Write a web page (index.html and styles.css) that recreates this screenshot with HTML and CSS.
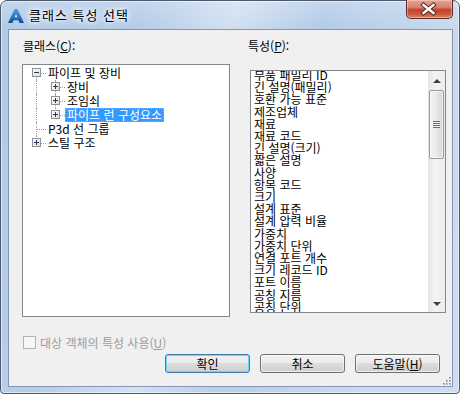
FILE: index.html
```html
<!DOCTYPE html>
<html lang="ko">
<head>
    <meta charset="UTF-8">
    <title>클래스 특성 선택</title>
    <link rel="stylesheet" href="styles.css">
</head>
<body>
    <div class="window">
        <div class="titlebar">
            <svg class="app-icon" width="16" height="14" viewBox="0 0 16 14">
                <defs>
                    <linearGradient id="ag" x1="0" y1="0" x2="0" y2="1">
                        <stop offset="0" stop-color="#45a6e8"/>
                        <stop offset="1" stop-color="#0c4f96"/>
                    </linearGradient>
                </defs>
                <path d="M6.6 0H9.4L16 14H11.6L10.4 11.2H5.6L4.4 14H0ZM8 4.6L6.6 8.4H9.4Z" fill="url(#ag)" fill-rule="evenodd"/>
            </svg>
            <span class="title">클래스 특성 선택</span>
            <div class="close-btn">
                <svg width="47" height="19" viewBox="0 0 47 19">
                    <path d="M18.5 5L28.5 13M28.5 5L18.5 13" stroke="#45201c" stroke-width="4.2" stroke-linecap="square"/>
                    <path d="M18.5 5L28.5 13M28.5 5L18.5 13" stroke="#fff" stroke-width="2.4" stroke-linecap="square"/>
                </svg>
            </div>
        </div>

        <div class="client">
            <div class="panes">
                <div class="pane pane-classes">
                    <div class="label">클래스(<u>C</u>):</div>
                    <div class="tree">
                        <div class="node">
                            <span class="cell first"><span class="exp open"></span></span>
                            <span class="text">파이프 및 장비</span>
                        </div>
                        <div class="node">
                            <span class="cell pipe"></span>
                            <span class="cell tee"><span class="exp"></span></span>
                            <span class="text">장비</span>
                        </div>
                        <div class="node">
                            <span class="cell pipe"></span>
                            <span class="cell tee"><span class="exp"></span></span>
                            <span class="text">조임쇠</span>
                        </div>
                        <div class="node">
                            <span class="cell pipe"></span>
                            <span class="cell elbow"><span class="exp"></span></span>
                            <span class="text selected">파이프 런 구성요소</span>
                        </div>
                        <div class="node">
                            <span class="cell tee"></span>
                            <span class="text">P3d 선 그룹</span>
                        </div>
                        <div class="node">
                            <span class="cell elbow"><span class="exp"></span></span>
                            <span class="text">스틸 구조</span>
                        </div>
                    </div>
                </div>

                <div class="pane pane-props">
                    <div class="label shifted">특성(<u>P</u>):</div>
                    <div class="listbox">
                        <ul class="items">
                            <li>부품 패밀리 ID</li>
                            <li>긴 설명(패밀리)</li>
                            <li>호환 가능 표준</li>
                            <li>제조업체</li>
                            <li>재료</li>
                            <li>재료 코드</li>
                            <li>긴 설명(크기)</li>
                            <li>짧은 설명</li>
                            <li>사양</li>
                            <li>항목 코드</li>
                            <li>크기</li>
                            <li>설계 표준</li>
                            <li>설계 압력 비율</li>
                            <li>가중치</li>
                            <li>가중치 단위</li>
                            <li>연결 포트 개수</li>
                            <li>크기 레코드 ID</li>
                            <li>포트 이름</li>
                            <li>공칭 지름</li>
                            <li>공칭 단위</li>
                        </ul>
                        <div class="scrollbar">
                            <div class="sb-btn"><span class="arrow up"></span></div>
                            <div class="sb-track">
                                <div class="sb-thumb"><span class="grip-lines"></span></div>
                            </div>
                            <div class="sb-btn"><span class="arrow down"></span></div>
                        </div>
                    </div>
                </div>
            </div>

            <div class="check-row">
                <span class="checkbox"></span>
                <span class="check-text">대상 객체의 특성 사용(<u>U</u>)</span>
            </div>

            <div class="buttons">
                <button class="btn default">확인</button>
                <button class="btn">취소</button>
                <button class="btn">도움말(<u>H</u>)</button>
            </div>

            <svg class="size-grip" width="9" height="9" viewBox="0 0 9 9">
                <g fill="#b8b8b8">
                    <rect x="7" y="1" width="2" height="2"/>
                    <rect x="4" y="4" width="2" height="2"/>
                    <rect x="7" y="4" width="2" height="2"/>
                    <rect x="1" y="7" width="2" height="2"/>
                    <rect x="4" y="7" width="2" height="2"/>
                    <rect x="7" y="7" width="2" height="2"/>
                </g>
                <g fill="#8a8a8a">
                    <rect x="7" y="1" width="1" height="1"/>
                    <rect x="4" y="4" width="1" height="1"/>
                    <rect x="7" y="4" width="1" height="1"/>
                    <rect x="1" y="7" width="1" height="1"/>
                    <rect x="4" y="7" width="1" height="1"/>
                    <rect x="7" y="7" width="1" height="1"/>
                </g>
            </svg>
        </div>
    </div>
</body>
</html>
```

FILE: styles.css
```css
body {
    margin: 0;
    font-family: "Noto Sans CJK KR", "Noto Sans", sans-serif;
    font-size: 12px;
    color: #000;
    background: #fff;
}
u {
    text-decoration: underline;
    text-underline-offset: 1px;
}

/* window frame */
.window {
    box-sizing: border-box;
    width: 460px;
    height: 394px;
    border: 1px solid #4d5868;
    border-radius: 7px 7px 4px 4px;
    padding: 0 6px 6px 7px;
    display: flex;
    flex-direction: column;
    background:
        linear-gradient(105deg, rgba(255,255,255,0) 25%, rgba(255,255,255,0.4) 42%, rgba(255,255,255,0) 58%, rgba(255,255,255,0.3) 85%),
        linear-gradient(to bottom, #c3d6ee, #b2cae6 30px, #b8cee8);
    box-shadow: inset 0 0 0 1px rgba(255, 255, 255, 0.55);
}
.titlebar {
    height: 28px;
    display: flex;
    align-items: center;
    flex: none;
}
.app-icon {
    align-self: flex-start;
    margin-top: 8px;
    flex: none;
}
.title {
    margin-left: 5px;
    font-size: 13px;
    letter-spacing: 1px;
    line-height: 16px;
    margin-top: -1px;
    text-shadow: 0 0 6px #fff, 0 0 10px #fff, 0 0 3px rgba(255,255,255,0.9);
}
.close-btn {
    align-self: flex-start;
    margin: -1px 0 0 auto;
    width: 47px;
    height: 19px;
    box-sizing: border-box;
    border: 1px solid #5e2b27;
    border-top: none;
    border-radius: 0 0 5px 5px;
    background: linear-gradient(to bottom, #e5a294 0%, #d9826f 40%, #c4402a 55%, #cd5a3e 80%, #dd8a6a 100%);
    box-shadow: inset 0 0 0 1px rgba(255, 220, 210, 0.45);
    display: flex;
    align-items: center;
    justify-content: center;
}
.close-btn svg {
    margin-left: -2px;
}

/* client area */
.client {
    position: relative;
    flex: 1;
    border: 1px solid #8397b2;
    background: #f0f0f0;
    padding-top: 9px;
    display: flex;
    flex-direction: column;
}
.panes {
    display: flex;
    align-items: flex-start;
}
.pane-classes {
    margin-left: 13px;
    width: 208px;
}
.pane-props {
    margin-left: 20px;
    width: 196px;
}
.label {
    height: 14px;
    line-height: 14px;
    margin-left: 1px;
}
.label.shifted {
    margin-left: -2px;
}

/* tree */
.tree {
    box-sizing: border-box;
    margin-top: 11px;
    height: 253px;
    border: 1px solid #828790;
    background: #fff;
    padding: 1px 0 0 4px;
}
.node {
    display: flex;
    height: 14px;
}
.cell {
    position: relative;
    flex: none;
    width: 19px;
    height: 14px;
}
.cell::before {
    content: "";
    position: absolute;
    left: 9px;
    top: 0;
    bottom: 0;
    border-left: 1px dotted #a0a0a0;
}
.cell::after {
    content: "";
    position: absolute;
    left: 10px;
    right: 0;
    top: 7px;
    border-top: 1px dotted #a0a0a0;
}
.cell.pipe::after {
    display: none;
}
.cell.first::before {
    top: 7px;
}
.cell.elbow::before {
    bottom: 7px;
}
.exp {
    position: absolute;
    z-index: 1;
    left: 5px;
    top: 2px;
    width: 9px;
    height: 9px;
    box-sizing: border-box;
    border: 1px solid #919191;
    background: linear-gradient(to bottom right, #ffffff, #dcdcdc);
}
.exp::before {
    content: "";
    position: absolute;
    left: 1px;
    top: 3px;
    width: 5px;
    height: 1px;
    background: #22386a;
}
.exp::after {
    content: "";
    position: absolute;
    left: 3px;
    top: 1px;
    width: 1px;
    height: 5px;
    background: #22386a;
}
.exp.open::after {
    display: none;
}
.text {
    border: 1px dotted transparent;
    padding: 0 1px;
    line-height: 12px;
    white-space: nowrap;
}
.text.selected {
    background: #3399ff;
    color: #fff;
    border-color: #f0a030;
}

/* property list */
.listbox {
    box-sizing: border-box;
    margin-top: 17px;
    height: 243px;
    border: 1px solid #828790;
    background: #fff;
    display: flex;
    overflow: hidden;
}
.items {
    flex: 1;
    list-style: none;
    margin: -2px 0 0;
    padding: 0 0 0 3px;
    line-height: 12.2px;
    white-space: nowrap;
    overflow: hidden;
}
.scrollbar {
    flex: none;
    width: 17px;
    display: flex;
    flex-direction: column;
    background: linear-gradient(to right, #e6e6e6, #f3f3f3 40%, #eeeeee);
}
.sb-btn {
    height: 17px;
    display: flex;
    align-items: center;
    justify-content: center;
}
.arrow {
    width: 0;
    height: 0;
    border-left: 4px solid transparent;
    border-right: 4px solid transparent;
}
.arrow.up {
    border-bottom: 4px solid #404040;
    margin-top: 2px;
}
.arrow.down {
    border-top: 4px solid #404040;
    margin-top: 1px;
}
.sb-track {
    flex: 1;
    padding: 2px 1px 0;
}
.sb-thumb {
    box-sizing: border-box;
    height: 69px;
    border: 1px solid #979797;
    border-radius: 2px;
    background: linear-gradient(to right, #f4f4f4, #e9e9e9 50%, #d6d6d6);
    box-shadow: inset 0 0 0 1px rgba(255, 255, 255, 0.7);
    display: flex;
    align-items: center;
    justify-content: center;
}
.grip-lines {
    width: 7px;
    height: 7px;
    background: repeating-linear-gradient(to bottom, #6f6f6f 0 1px, #f0f0f0 1px 2px);
}

/* bottom */
.check-row {
    display: flex;
    align-items: center;
    margin: 19px 0 0 14px;
    height: 13px;
    color: #9c9c9c;
}
.checkbox {
    box-sizing: border-box;
    width: 13px;
    height: 13px;
    border: 1px solid #b4b4b4;
    background: #f6f6f6;
}
.check-text {
    margin-left: 4px;
    line-height: 13px;
}
.buttons {
    display: flex;
    justify-content: flex-end;
    gap: 10px;
    margin-top: 5px;
    padding-right: 12px;
}
.btn {
    box-sizing: border-box;
    width: 85px;
    height: 19px;
    padding: 0;
    border: 1px solid #707070;
    border-radius: 3px;
    background: linear-gradient(to bottom, #f2f2f2 0%, #ebebeb 45%, #dddddd 50%, #cfcfcf 100%);
    box-shadow: inset 0 0 0 1px rgba(255, 255, 255, 0.6);
    font: inherit;
    line-height: 16px;
    color: #000;
}
.btn.default {
    border-color: #3c7fb1;
    box-shadow: inset 0 0 0 1px #6fd2f8;
}
.size-grip {
    position: absolute;
    right: 1px;
    bottom: 1px;
}
```
